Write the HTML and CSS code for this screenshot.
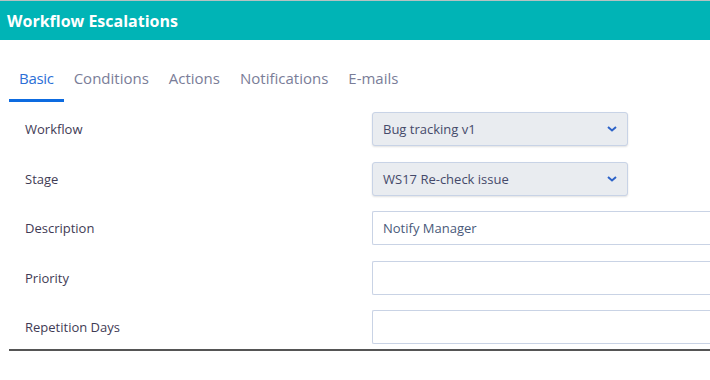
FILE: index.html
```html
<!DOCTYPE html>
<html lang="en">
<head>
  <meta charset="UTF-8">
  <title>Workflow Escalations</title>
  <link rel="stylesheet" href="styles.css">
</head>
<body>
  <div class="header">
    <h1>Workflow Escalations</h1>
  </div>

  <div class="content">
    <ul class="tabs">
      <li class="active">Basic</li>
      <li>Conditions</li>
      <li>Actions</li>
      <li>Notifications</li>
      <li>E-mails</li>
    </ul>

    <form class="form">
      <div class="row">
        <label>Workflow</label>
        <div class="select">
          <span>Bug tracking v1</span>
          <svg width="10" height="6" viewBox="0 0 10 6"><path d="M1 1 L5 4.5 L9 1" fill="none" stroke="#2d63c8" stroke-width="2"/></svg>
        </div>
      </div>
      <div class="row">
        <label>Stage</label>
        <div class="select">
          <span>WS17 Re-check issue</span>
          <svg width="10" height="6" viewBox="0 0 10 6"><path d="M1 1 L5 4.5 L9 1" fill="none" stroke="#2d63c8" stroke-width="2"/></svg>
        </div>
      </div>
      <div class="row">
        <label>Description</label>
        <input type="text" class="input" value="Notify Manager">
      </div>
      <div class="row">
        <label>Priority</label>
        <input type="text" class="input">
      </div>
      <div class="row">
        <label>Repetition Days</label>
        <input type="text" class="input">
      </div>
    </form>
  </div>
</body>
</html>
```

FILE: styles.css
```css
body {
  margin: 0;
  font-family: "Open Sans", "Noto Sans", sans-serif;
  background: white;
  overflow: hidden;
}

.header {
  background-color: #00b4b6;
  border-top: 1px solid #b4c2c2;
  height: 39px;
  display: flex;
  align-items: center;
  padding-left: 7px;
}

.header h1 {
  margin: 0;
  font-size: 16px;
  font-weight: bold;
  color: white;
}

.content {
  padding-left: 9px;
}

.tabs {
  list-style: none;
  margin: 27px 0 0 0;
  padding: 0;
  display: flex;
}

.tabs li {
  padding: 0 10px 10px 10px;
  font-size: 15px;
  color: #7a7d98;
  border-bottom: 3px solid transparent;
  line-height: 22px;
}

.tabs li.active {
  color: #2b6fd6;
  border-bottom-color: #0d6be0;
  letter-spacing: -0.3px;
}

.form {
  margin-top: 10px;
  border-bottom: 2px solid #555;
  padding-bottom: 5px;
  display: flex;
  flex-direction: column;
  gap: 15.5px;
}

.row {
  display: grid;
  grid-template-columns: 347px 1fr;
  align-items: center;
  padding-left: 16px;
  height: 34px;
}

.row label {
  font-size: 13px;
  color: #3f3b55;
}

.select {
  width: 256px;
  height: 34px;
  box-sizing: border-box;
  background: #e9ecf0;
  border: 1px solid #c8d3e6;
  border-radius: 3px;
  box-shadow: 0 1px 2px rgba(0, 0, 0, 0.12);
  display: flex;
  align-items: center;
  justify-content: space-between;
  padding: 0 10px;
  font-size: 13px;
  color: #454a6a;
}

.input {
  height: 34px;
  box-sizing: border-box;
  border: 1px solid #c9d3e5;
  border-right: none;
  border-radius: 2px 0 0 2px;
  padding: 0 10px;
  font-family: inherit;
  font-size: 13px;
  color: #4a5a7a;
  outline: none;
}
```
